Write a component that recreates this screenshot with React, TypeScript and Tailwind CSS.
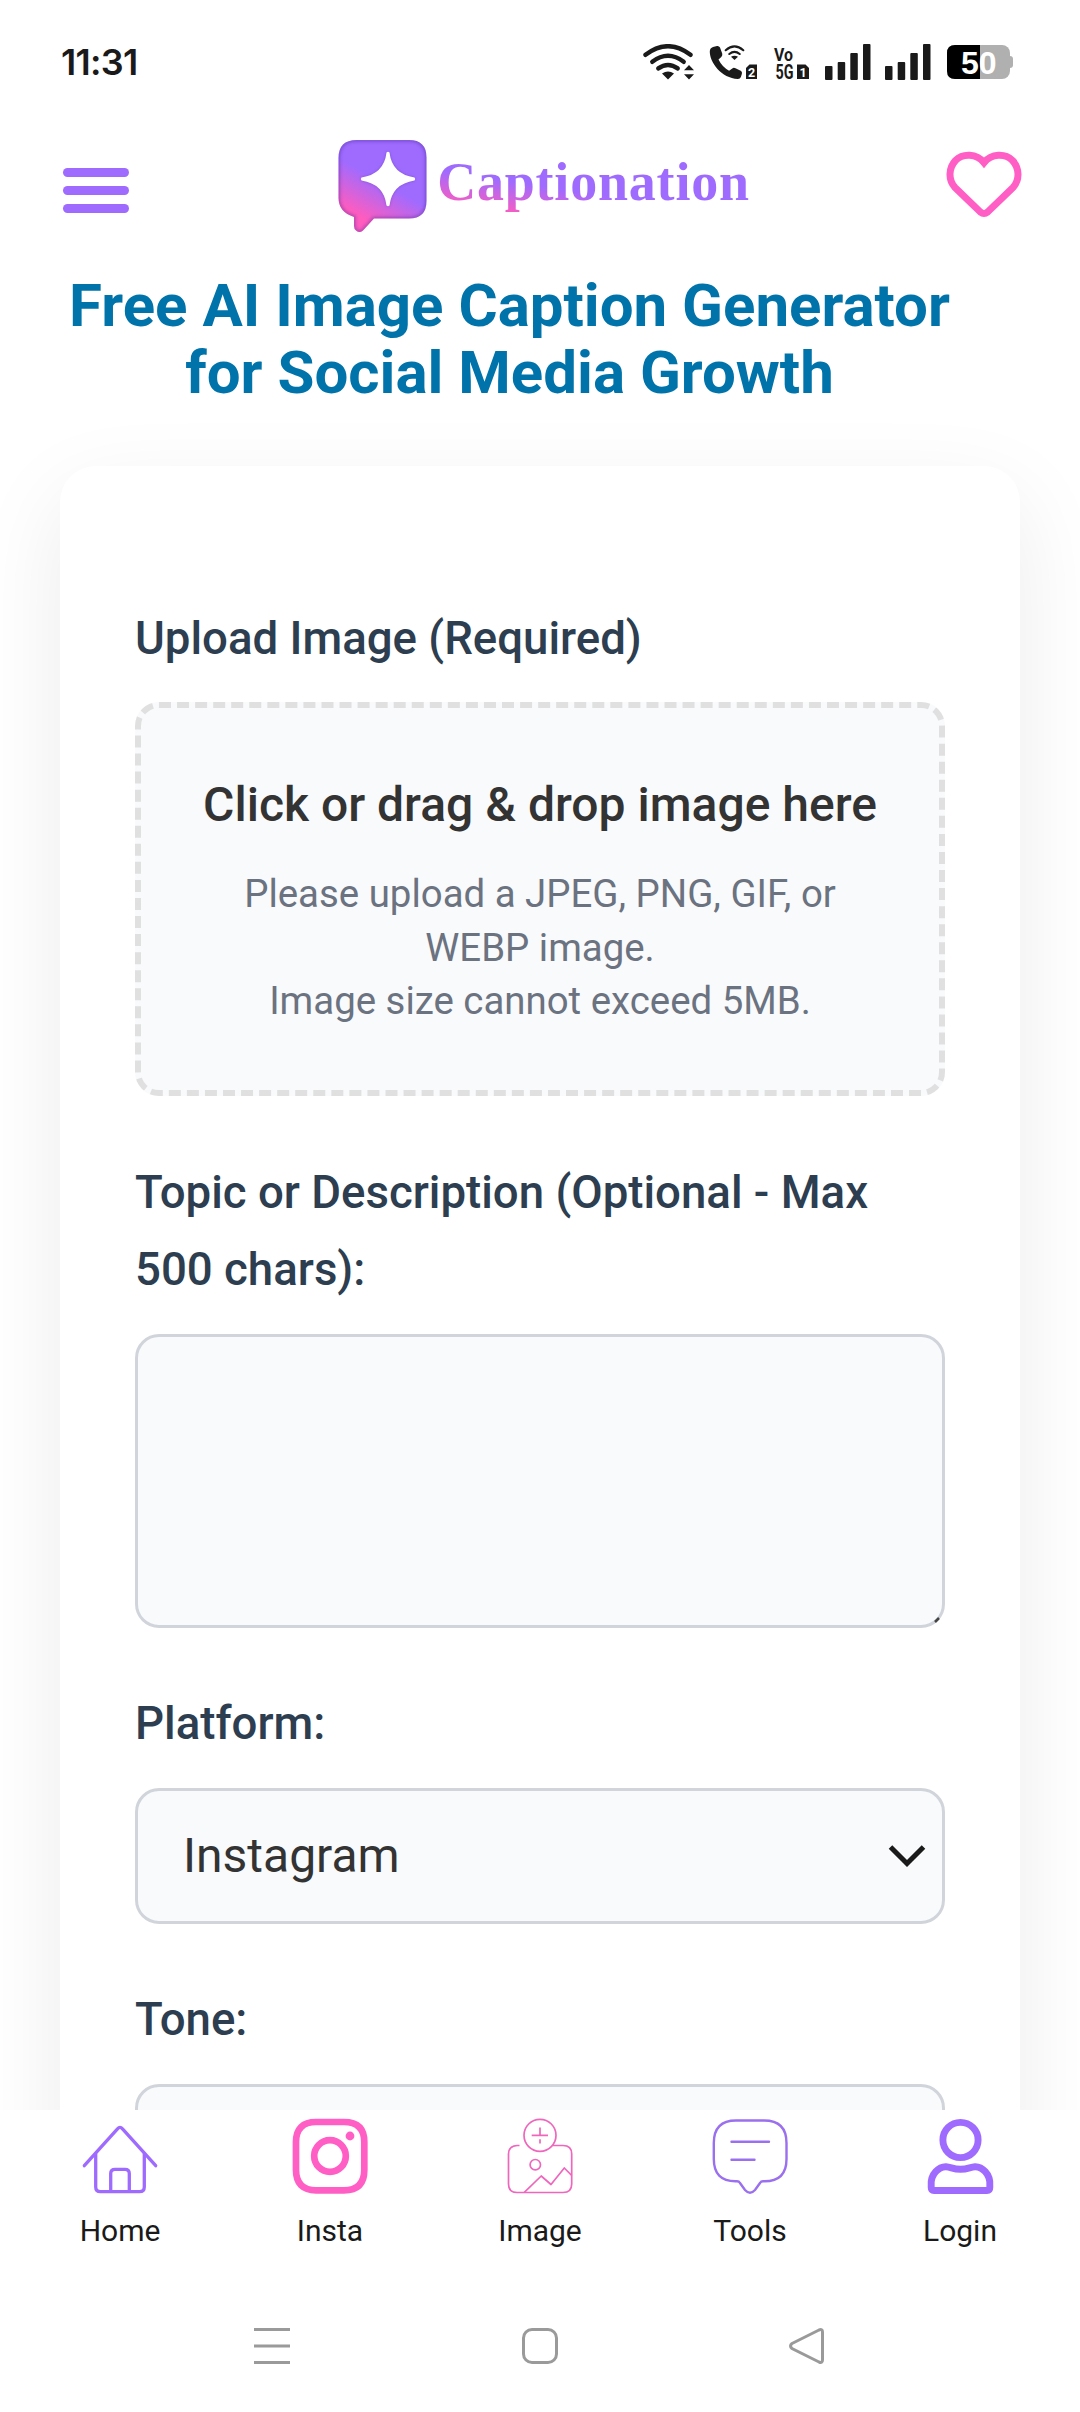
import React from 'react';

const PINK = '#ff5fc4';
const PURPLE = '#9f6bff';
const INK = '#1a1a1a';

const BUBBLE =
  'M355.5 140H408Q425.5 140 425.5 157.5V201Q425.5 218.5 408 218.5H373L362 230.5Q358.5 233.5 355 230.5Q353 229 353 226V217Q337.5 212 337.5 198V158Q337.5 140 355.5 140Z';
const STAR =
  'M385.5 152.5q1.5-1.5 3 0Q391 174 413.5 177.5q1.5 1.5 0 3Q391 184 388.5 205.5q-1.5 1.5-3 0Q383 184 360.5 180.5q-1.5-1.5 0-3Q383 174 385.5 152.5Z';

const SignalBars: React.FC = () => (
  <svg width="46" height="36" viewBox="0 0 46 36" fill={INK}>
    <rect x="0" y="22" width="7.5" height="14" rx="1" />
    <rect x="12.7" y="18" width="7.5" height="18" rx="1" />
    <rect x="25.3" y="9" width="7.5" height="27" rx="1" />
    <rect x="38" y="0" width="7.5" height="36" rx="1" />
  </svg>
);

const StatusBar: React.FC = () => (
  <div className="flex h-[124px] shrink-0 items-center justify-between pl-[61px] pr-[67px]">
    <span className="font-['Inter'] text-[36px] font-semibold leading-none tracking-[-0.7px] text-[#1a1a1a]">
      11:31
    </span>
    <div className="flex items-center">
      {/* wifi with traffic arrows */}
      <svg width="52" height="36" viewBox="643 44 52 36" fill="none" stroke={INK} strokeWidth="4.4" strokeLinecap="round">
        <path d="M645.5 54.8Q668 37.6 690.5 54.8" />
        <path d="M652.3 61.8Q668 49.8 683.7 61.8" />
        <path d="M658.3 68.4Q668 61.6 677.7 68.4" />
        <path d="M662 73.6Q668 69.6 674 73.6L668 79.6Z" fill={INK} stroke="none" />
        <path d="M689 65L694 70.3H684ZM689 79.6L694 74.3H684Z" fill={INK} stroke="none" />
      </svg>
      {/* wifi calling, sim 2 */}
      <svg className="ml-[14px]" width="49" height="36" viewBox="709 44 49 36" fill={INK}>
        <path d="M713 47l4-1q2-.4 3 1.6l2.2 6q.6 2-.9 3.3l-2.8 2.6q3.6 7.4 10.6 11.2l3.2-2.3q1.5-1 3.2-.1l5.2 2.5q1.8 1.2 1.2 3l-1 3.2q-.8 1.9-3 1.9C721.5 78.5 709.3 62 709.8 51q.2-3 3.2-4z" />
        <g fill="none" stroke={INK} strokeWidth="2.1" strokeLinecap="round">
          <path d="M725.7 50.2Q734.5 42.6 743.3 50.2" />
          <path d="M729.3 54Q734.5 49.6 739.7 54" />
        </g>
        <path d="M731 56.8Q734.5 54.8 738 56.8L734.5 60Z" />
        <path d="M749.5 64.5H757V79H746V68Z" />
        <text x="748" y="76.5" fontSize="12.5" fontWeight="700" fill="#fff">2</text>
      </svg>
      {/* Vo5G, sim 1 */}
      <svg className="ml-4 overflow-visible" width="36" height="36" viewBox="774 44 36 36" fill={INK}>
        <text x="774" y="60.5" fontSize="18.5" fontWeight="700" textLength="19" lengthAdjust="spacingAndGlyphs">Vo</text>
        <text x="775.5" y="78.5" fontSize="20.5" fontWeight="700" textLength="18" lengthAdjust="spacingAndGlyphs">5G</text>
        <path d="M797 64.5H805.5L809 68V79H797Z" />
        <text x="799.5" y="76.5" fontSize="12.5" fontWeight="700" fill="#fff">1</text>
      </svg>
      <div className="ml-[15px] flex gap-[14px]">
        <SignalBars />
        <SignalBars />
      </div>
      <svg className="ml-4 overflow-visible" width="66" height="34" viewBox="0 0 66 34">
        <rect x="58" y="11" width="8" height="12" rx="3" fill="#b0b0b0" />
        <rect width="63" height="34" rx="8" fill="#b0b0b0" />
        <path d="M33 0H8Q0 0 0 8V26Q0 34 8 34H33Z" fill="#000" />
        <text x="31.7" y="28.5" textAnchor="middle" fontFamily="Liberation Sans" fontSize="32" fontWeight="700" fill="#fff">50</text>
      </svg>
    </div>
  </div>
);

const LogoMark: React.FC = () => (
  <svg width="90" height="94" viewBox="337 139 90 94">
    <defs>
      <linearGradient id="mark" gradientUnits="userSpaceOnUse" x1="350" y1="212" x2="370" y2="176">
        <stop offset="0" stopColor="#ff5cbe" />
        <stop offset="1" stopColor={PURPLE} />
      </linearGradient>
      <clipPath id="bubble">
        <path d={BUBBLE} />
      </clipPath>
      <filter id="soft">
        <feGaussianBlur stdDeviation="1.5" />
      </filter>
    </defs>
    <g clipPath="url(#bubble)">
      <rect x="337" y="139" width="90" height="95" fill="url(#mark)" />
      <path d={BUBBLE} fill="none" stroke="#4b2a9c" strokeOpacity=".38" strokeWidth="4" filter="url(#soft)" />
    </g>
    <path d={STAR} fill="#4b2a9c" opacity=".4" filter="url(#soft)" />
    <path d={STAR} fill="#fff" />
  </svg>
);

const Header: React.FC = () => (
  <header className="flex h-[122px] shrink-0 items-start justify-between pl-[63px] pr-[58px]">
    <button className="mt-11 flex flex-col gap-[9px]">
      <span className="h-[9px] w-[66px] rounded-full bg-[#9f6bff]" />
      <span className="h-[9px] w-[66px] rounded-full bg-[#9f6bff]" />
      <span className="h-[9px] w-[66px] rounded-full bg-[#9f6bff]" />
    </button>
    <div className="ml-[13px] mt-[15px] flex items-start">
      <LogoMark />
      <span className="ml-[9px] mt-[13px] h-[60px] bg-[linear-gradient(9deg,#ff5cbe_8px,#9f6bff_42px)] bg-clip-text font-['Liberation_Serif'] text-[54px] font-bold leading-[60px] tracking-[0.8px] text-transparent">
        Captionation
      </span>
    </div>
    <svg className="mt-[26px]" width="76" height="68" viewBox="946.5 150 76 68" fill="none" stroke={PINK} strokeWidth="7">
      <path d="M984.5 162.7C977 153.5 963.5 153 956 160.500C949 168 948.5 180 955.5 187.5L980.8 212Q984.5 215 988.2 212L1013.5 187.5C1020.5 180 1020 168 1013 160.5C1005.5 153 992 153.5 984.5 162.7Z" />
    </svg>
  </header>
);

interface FieldProps {
  label: string;
  children: React.ReactNode;
}

const Field: React.FC<FieldProps> = ({ label, children }) => (
  <div className="mb-[57.5px]">
    <div className="mb-[25px] text-[45.6px] font-medium leading-[77.5px] text-[#2c3e50]">{label}</div>
    {children}
  </div>
);

const SelectBox: React.FC<{ value: string }> = ({ value }) => (
  <div className="flex h-[136px] items-center justify-between rounded-3xl border-[3px] border-[#d1d5db] bg-[#f9fafc] pl-[45px] pr-4 text-[48px] text-[#333]">
    {value}
    <svg className="ml-auto" width="38" height="24" viewBox="0 0 38 24" fill="none" stroke={INK} strokeWidth="5">
      <path d="M2.5 3L19 19.5L35.5 3" />
    </svg>
  </div>
);

const navItems = [
  {
    label: 'Home',
    icon: (
      <g stroke={PURPLE} strokeWidth="3.3" strokeLinecap="round" strokeLinejoin="round">
        <path d="M4.3 49.7L37.5 12.8Q40 10 42.5 12.8L75.7 49.7" />
        <path d="M15.7 38V71Q15.7 75.7 20.4 75.7H59.6Q64.3 75.7 64.3 71V38" />
        <path d="M30.7 75V57.5Q30.7 53.3 35 53.3H45Q49.3 53.3 49.3 57.5V75" />
      </g>
    ),
  },
  {
    label: 'Insta',
    icon: (
      <g stroke={PINK} strokeWidth="6.7">
        <path d="M26 6H54Q74.3 6 74.3 26V54Q74.3 74.3 54 74.3H26Q6 74.3 6 54V26Q6 6 26 6Z" />
        <circle cx="40" cy="40" r="15.8" />
        <circle cx="60" cy="20" r="4.4" fill={PINK} stroke="none" />
      </g>
    ),
  },
  {
    label: 'Image',
    icon: (
      <g stroke="#ef66bd" strokeWidth="1.7" strokeLinejoin="round">
        <circle cx="40" cy="19.3" r="16" />
        <path d="M31.7 19.3H48M40 11.5V19.3M40 23.3V27.5" />
        <path d="M19.5 29.5H17Q8.5 30 8.5 38V68Q8.5 76.5 17 76.5H63Q71.7 76.5 71.7 68V38Q71.7 29.5 63 29.5H52.5" />
        <circle cx="35.3" cy="48.7" r="5.2" />
        <path d="M24.3 76.3L41.2 60L51 68.5L64.3 52L71.7 59.5" />
      </g>
    ),
  },
  {
    label: 'Tools',
    icon: (
      <g stroke="#9b70ee" strokeWidth="2.4" strokeLinecap="round">
        <path d="M26 4.5H54Q76.5 4.5 76.5 27V43Q76.5 65.3 54.5 65.3H53Q51 65.3 50 67L45 74Q40 79.5 35 74L30 67Q29 65.3 27 65.3H25.5Q3.8 65.3 3.8 43V27Q3.8 4.5 26 4.5Z" />
        <path d="M21.5 25.7H59M21.5 43.7H44.5" />
      </g>
    ),
  },
  {
    label: 'Login',
    icon: (
      <g stroke={PURPLE} strokeWidth="6.9">
        <circle cx="40.5" cy="24" r="17.6" />
        <path d="M11.2 69C10.5 58 19 50.5 26 50.7C31 51 33 53.3 40.5 53.3C48 53.3 50 51 55 50.7C62 50.5 70.5 58 69.8 69V71.5Q69.8 74.5 67 74.5H14Q11.2 74.5 11.2 71.5Z" />
      </g>
    ),
  },
];

const BottomNav: React.FC = () => (
  <nav className="grid h-[170px] shrink-0 grid-cols-5 bg-white px-[15px]">
    {navItems.map(({ label, icon }) => (
      <div key={label} className="flex flex-col items-center pt-[6px]">
        <svg className="h-20 w-20" viewBox="0 0 80 80" fill="none">
          {icon}
        </svg>
        <span className="mt-[17px] text-[30px] leading-[36px] text-[#1a1a1a]">{label}</span>
      </div>
    ))}
  </nav>
);

const SystemNav: React.FC = () => (
  <div className="flex flex-1 items-center justify-between bg-white px-[253px]">
    <svg width="38" height="38" viewBox="0 0 38 38" stroke="#9a9a9a" strokeWidth="3.2">
      <path d="M1 2.5H37M1 19H37M1 35.5H37" />
    </svg>
    <svg width="38" height="38" viewBox="0 0 38 38" fill="none" stroke="#9a9a9a" strokeWidth="3">
      <rect x="2.5" y="2.5" width="33" height="33" rx="8.5" />
    </svg>
    <svg width="38" height="38" viewBox="2 0 38 38" fill="none" stroke="#9a9a9a" strokeWidth="3">
      <path d="M5 16.5L32 3Q35.5 1.5 35.5 5V33Q35.5 36.5 32 35L5 21.5Q2 19 5 16.5Z" />
    </svg>
  </div>
);

const App: React.FC = () => {
  return (
    <div className="flex h-[2412px] w-[1080px] flex-col overflow-hidden bg-white font-['Roboto',sans-serif]">
      <StatusBar />
      <Header />
      <main className="h-[1864px] shrink-0 overflow-hidden px-[60px]">
        <h1 className="mr-[61px] mt-[26px] text-center text-[60px] font-bold leading-[67px] text-[#0073aa]">
          Free AI Image Caption Generator
          <br />
          for Social Media Growth
        </h1>
        <section className="mt-[60px] rounded-[36px] bg-white px-[75px] pb-20 pt-[133.5px] shadow-[0_30px_90px_rgba(0,0,0,0.08)]">
          <Field label="Upload Image (Required)">
            <div className="flex h-[394px] flex-col items-center rounded-3xl border-[6px] border-dashed border-[#e0e0e0] bg-[#f9fafc] pt-[61px] text-center">
              <p className="text-[48px] font-medium leading-[72px] text-[#333]">Click or drag &amp; drop image here</p>
              <p className="mt-[26px] text-[38.4px] leading-[53.6px] text-[#6b7280]">
                Please upload a JPEG, PNG, GIF, or
                <br />
                WEBP image.
                <br />
                Image size cannot exceed 5MB.
              </p>
            </div>
          </Field>
          <Field label="Topic or Description (Optional - Max 500 chars):">
            <div className="relative">
              <textarea className="block h-[294px] w-full resize-none rounded-3xl border-[3px] border-[#d1d5db] bg-[#f9fafc]" />
              {/* corner grip */}
              <svg className="absolute bottom-[5px] right-[5px]" width="6" height="6" viewBox="0 0 6 6" stroke="#444" strokeWidth="2.5">
                <path d="M1 5L5 1" />
              </svg>
            </div>
          </Field>
          <Field label="Platform:">
            <SelectBox value="Instagram" />
          </Field>
          <Field label="Tone:">
            <SelectBox value="" />
          </Field>
        </section>
      </main>
      <BottomNav />
      <SystemNav />
    </div>
  );
};

export default App;
